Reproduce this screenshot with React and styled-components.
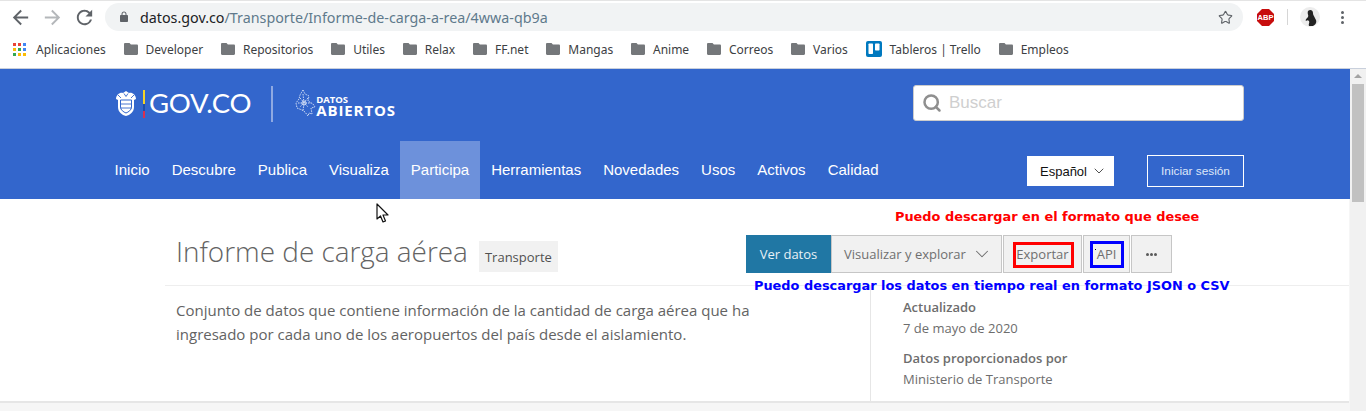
import React from 'react'
import styled, { createGlobalStyle } from 'styled-components'
import { Star, ChevronDown, Search } from 'lucide-react'

const GlobalStyle = createGlobalStyle`
  html, body {
    margin: 0;
    height: 411px;
    overflow: hidden;
    background: #fff;
    font-family: 'Open Sans', sans-serif;
  }
  * { box-sizing: border-box; }
`

const Shell = styled.div`
  width: 1366px;
  height: 411px;
  display: flex;
  flex-direction: column;
  overflow: hidden;
  position: relative;
`

/* browser chrome */
const Toolbar = styled.div`
  height: 35px;
  padding: 2px 0 0 9px;
  border-top: 1px solid #e4e4e4;
  display: flex;
  align-items: flex-start;
  background: #fff;
`
const NavIcon = styled.div`
  width: 32px;
  height: 28px;
  display: flex;
  align-items: center;
  color: ${props => props.color};
`
const UrlBar = styled.div`
  width: 1138px;
  height: 28px;
  background: #f1f3f4;
  border-radius: 14px;
  display: flex;
  align-items: center;
  padding: 0 10px 0 13px;
  font-family: 'Noto Sans', sans-serif;
  font-size: 14.3px;
  color: #5f7a8c;
`
const Host = styled.span`
  color: #202124;
  margin-left: 10px;
`
const ToolRight = styled.div`
  margin-left: auto;
  display: flex;
  align-items: center;
  color: #5f6368;
`
const Extras = styled.div`
  margin-left: 14px;
  display: flex;
  align-items: center;
  height: 28px;
`
const Divider = styled.div`
  width: 1px;
  height: 16px;
  background: #d6d6d6;
  margin: 0 12px 0 13px;
`
const Dots = styled.div`
  margin-left: 21px;
  display: flex;
  flex-direction: column;
  gap: 2px;
  span {
    width: 3px;
    height: 3px;
    border-radius: 50%;
    background: #5f6368;
  }
`
const Bookmarks = styled.div`
  height: 34px;
  padding: 0 0 5px 13px;
  display: flex;
  align-items: center;
  background: #fff;
  font-family: 'Noto Sans', sans-serif;
  font-size: 12px;
  color: #3c4043;
  border-bottom: 1px solid #c9d0dc;
`
const Bookmark = styled.div`
  display: flex;
  align-items: center;
  gap: 8px;
  margin-right: 17.8px;
  white-space: nowrap;
`
const AppsGrid = styled.div`
  width: 15px;
  display: grid;
  grid-template-columns: repeat(3, 3px);
  gap: 2px;
`
const AppsDot = styled.i`
  display: block;
  width: 3px;
  height: 3px;
  background: ${props => props.color};
`

/* page */
const Viewport = styled.div`
  flex: 1;
  display: flex;
  min-height: 0;
`
const Page = styled.div`
  flex: 1;
  min-width: 0;
  background: #f6f6f6;
  display: flex;
  flex-direction: column;
`
const Scrollbar = styled.div`
  width: 16px;
  background: #f1f1f1;
  padding: 15px 2px 0 2px;
  position: relative;
  &::before {
    content: '';
    position: absolute;
    top: 5px;
    left: 4px;
    border-left: 4px solid transparent;
    border-right: 4px solid transparent;
    border-bottom: 4px solid #a3a3a3;
  }
`
const ScrollThumb = styled.div`
  height: 118px;
  background: #c1c1c1;
`
const Header = styled.header`
  height: 130px;
  background: #3366cc;
  display: flex;
  flex-direction: column;
`
const HeaderTop = styled.div`
  height: 72px;
  padding: 16px 106px 0 115px;
  display: flex;
  justify-content: space-between;
`
const Logos = styled.div`
  display: flex;
  align-items: center;
  height: 36px;
  color: #fff;
`
const FlagBar = styled.div`
  width: 2px;
  height: 28px;
  margin: 2px 4px 0 6px;
  background: linear-gradient(#f5d327 0 50%, #1f4fa8 50% 75%, #d9304f 75%);
`
const GovText = styled.span`
  font-family: Lato, sans-serif;
  font-size: 27.5px;
  line-height: 36px;
  letter-spacing: -0.3px;
`
const LogoRule = styled.div`
  width: 2px;
  height: 36px;
  background: #8fa9e2;
  margin: 1px 21px 0 20px;
`
const DatosStack = styled.div`
  display: flex;
  flex-direction: column;
  margin-top: 7px;
  font-family: 'Open Sans', sans-serif;
  font-weight: 700;
`
const DatosSmall = styled.span`
  font-size: 9.5px;
  line-height: 8px;
`
const DatosBig = styled.span`
  font-size: 15px;
  line-height: 13px;
  letter-spacing: 0.9px;
`
const SearchBox = styled.div`
  width: 331px;
  height: 36px;
  background: #fff;
  border: 1px solid #ccc;
  border-radius: 3px;
  display: flex;
  align-items: center;
  padding-left: 8px;
  gap: 7px;
  font-family: 'Liberation Sans', sans-serif;
  font-size: 17px;
  color: #cfcfcf;
`
const HeaderNav = styled.nav`
  height: 58px;
  padding: 0 106px 0 103.6px;
  display: flex;
  font-family: 'Liberation Sans', sans-serif;
  font-size: 15px;
  color: #fff;
`
const NavItem = styled.div`
  padding: 0 11px 2px;
  display: flex;
  align-items: center;
  background: ${props => (props.$active ? '#6d91db' : 'transparent')};
`
const NavRight = styled.div`
  margin-left: auto;
  display: flex;
  align-items: center;
  padding-top: 2px;
  gap: 33px;
`
const LangButton = styled.div`
  width: 87px;
  height: 30px;
  padding-left: 13px;
  background: #fff;
  color: #111;
  font-size: 13px;
  display: flex;
  align-items: center;
  gap: 4px;
`
const LoginButton = styled.div`
  width: 97px;
  height: 32px;
  border: 1px solid #fff;
  color: #dfe7f8;
  font-size: 11.8px;
  display: flex;
  align-items: center;
  justify-content: center;
`
const Body = styled.main`
  height: 204px;
  margin-right: 1px;
  background: #fff;
  border-bottom: 2px solid #e6e6e6;
  padding-left: 165px;
  color: #636363;
  overflow: hidden;
`
const TitleRow = styled.div`
  height: 86px;
  width: 1007px;
  padding: 36px 0 0 11px;
  display: flex;
  align-items: flex-start;
`
const Title = styled.h1`
  margin: -3px 0 0;
  font-size: 27.9px;
  line-height: 38px;
  font-weight: 300;
  color: #636363;
  white-space: nowrap;
`
const Tag = styled.span`
  margin: 6px 0 0 11px;
  width: 79px;
  height: 31px;
  background: #f1f1f1;
  font-size: 13px;
  color: #505050;
  display: flex;
  align-items: center;
  justify-content: center;
`
const Actions = styled.div`
  margin-left: auto;
  display: flex;
  height: 38px;
`
const ActionButton = styled.div`
  width: ${props => props.$width}px;
  margin-right: ${props => props.$gap || 0}px;
  display: flex;
  align-items: center;
  justify-content: center;
  font-size: 13px;
  background: ${props => (props.$primary ? '#2077a4' : '#f1f1f1')};
  color: ${props => (props.$primary ? '#e8f1f6' : '#6f6f6f')};
  border: ${props => (props.$primary ? 'none' : '1px solid #c6c6c6')};
`
const MenuButton = styled(ActionButton)`
  justify-content: flex-start;
  padding-left: 12px;
  gap: 5px;
`
const More = styled.div`
  display: flex;
  gap: 1px;
  i {
    width: 3px;
    height: 3px;
    border-radius: 50%;
    background: #5a5a5a;
  }
`
const Columns = styled.div`
  display: grid;
  grid-template-columns: 705px 1fr;
  border-top: 1px solid #eee;
  height: 118px;
`
const Description = styled.p`
  margin: 0;
  padding: 12px 0 0 11px;
  font-size: 15px;
  line-height: 24px;
  color: #636363;
  white-space: nowrap;
`
const Aside = styled.aside`
  border-left: 1px solid #e6e6e6;
  padding: 11px 0 0 32px;
  font-size: 13px;
  line-height: 21px;
  color: #6d6d6d;
`
const MetaLabel = styled.div`
  font-weight: 600;
`
const MetaValue = styled.div`
  margin-bottom: ${props => (props.$gap ? 9 : 0)}px;
`

/* marks drawn over the screenshot */
const Note = styled.div`
  position: absolute;
  left: ${props => props.$x}px;
  top: ${props => props.$y}px;
  color: ${props => props.color};
  font-family: 'DejaVu Sans', sans-serif;
  font-weight: 700;
  font-size: 12.9px;
  line-height: 14px;
  white-space: nowrap;
`
const MarkBox = styled.div`
  position: absolute;
  left: ${props => props.$x}px;
  top: ${props => props.$y}px;
  width: ${props => props.$w}px;
  height: ${props => props.$h}px;
  border: 3px solid ${props => props.color};
`
const Speck = styled.div`
  position: absolute;
  left: 1095px;
  top: 249px;
  width: 1px;
  height: 1px;
  background: #111;
`
const Cursor = styled.svg`
  position: absolute;
  left: 376px;
  top: 203px;
`

const MaterialIcon = ({ d }) => (
  <svg width="23" height="23" viewBox="0 0 24 24" fill="currentColor"><path d={d} /></svg>
)

const BACK = 'M20 11H7.83l5.59-5.59L12 4l-8 8 8 8 1.41-1.41L7.83 13H20v-2z'
const FORWARD = 'M12 4l-1.41 1.41L16.17 11H4v2h12.17l-5.58 5.59L12 20l8-8z'
const RELOAD = 'M17.65 6.35A7.958 7.958 0 0 0 12 4c-4.42 0-7.99 3.58-7.99 8s3.57 8 7.99 8c3.73 0 6.84-2.55 7.73-6h-2.08A5.99 5.99 0 0 1 12 18c-3.31 0-6-2.69-6-6s2.69-6 6-6c1.66 0 3.14.69 4.22 1.78L13 11h7V4l-2.35 2.35z'

const LockIcon = () => (
  <svg width="12" height="12" viewBox="0 0 24 24" fill="#5f6368">
    <path d="M18 8h-1V6c0-2.76-2.24-5-5-5S7 3.24 7 6v2H6c-1.1 0-2 .9-2 2v10c0 1.1.9 2 2 2h12c1.1 0 2-.9 2-2V10c0-1.1-.9-2-2-2zM9 6c0-1.66 1.34-3 3-3s3 1.34 3 3v2H9V6z" />
  </svg>
)

const Folder = () => (
  <svg width="14" height="12" viewBox="0 0 14 12">
    <path d="M1.2 0h4.3l1.4 1.6h5.9c.7 0 1.2.5 1.2 1.2v8c0 .7-.5 1.2-1.2 1.2H1.2C.5 12 0 11.5 0 10.8V1.2C0 .5.5 0 1.2 0z" fill="#74777a" />
  </svg>
)

const TrelloIcon = () => (
  <svg width="16" height="16" viewBox="0 0 16 16">
    <rect width="16" height="16" rx="2" fill="#0079bf" />
    <rect x="2.5" y="2.5" width="4.5" height="10.5" rx="0.7" fill="#fff" />
    <rect x="9" y="2.5" width="4.5" height="7" rx="0.7" fill="#fff" />
  </svg>
)

const AbpIcon = () => (
  <svg width="17" height="17" viewBox="0 0 17 17">
    <polygon points="5,0 12,0 17,5 17,12 12,17 5,17 0,12 0,5" fill="#c70d0d" />
    <text x="8.5" y="11.2" textAnchor="middle" fontSize="7.5" fontWeight="700" fontFamily="Liberation Sans" fill="#fff">ABP</text>
  </svg>
)

const Avatar = () => (
  <svg width="20" height="20" viewBox="0 0 20 20">
    <circle cx="10" cy="10" r="10" fill="#ececec" />
    <path d="M8 4c2-2 5-1 5 2 0 2 1 3 3 7 1 3-1 5-3 6H9c-1-2 1-3 0-5-1-1-2-1-3 0-1-1 1-3 2-4 1-2-1-3 0-6z" fill="#222" />
  </svg>
)

const Shield = () => (
  <svg width="22" height="27" viewBox="0 0 22 27">
    <path d="M1 9C1 5 5 2 8 3l3-2 3 2c3-1 7 2 7 6l-2 1v7c0 5-4 8-8 9-4-1-8-4-8-9v-7z" fill="#fff" />
    <path d="M5.5 10h11v7c0 3-3 5-5.5 6-2.5-1-5.5-3-5.5-6z" fill="none" stroke="#3366cc" strokeWidth="1" />
    <path d="M5.5 14h11M5.5 18h11M3 5l3 3M19 5l-3 3M9 3.5l2 3 2-3" stroke="#3366cc" strokeWidth="0.9" fill="none" />
  </svg>
)

const MapMark = () => (
  <svg width="22" height="28" viewBox="0 0 22 28" fill="none" stroke="#dce6f8" strokeWidth="0.9">
    <path d="M9 1l2 4 4 2-1 5 5 3 2 3-4 1 1 6-3-1-1 3-3-4-3-2-5-2-1-5 3-4 1-4z" strokeDasharray="1.5 1" />
    <path d="M4 14h13M9 5l1 9-1 8M6 9l8 9M14 9l-8 9" strokeDasharray="1.5 1" />
    <circle cx="10" cy="14" r="2" />
  </svg>
)

const APPS = ['#ea4335', '#ea4335', '#4285f4', '#fbbc05', '#34a853', '#4285f4', '#34a853', '#fbbc05', '#fbbc05']
const BOOKMARKS = ['Developer', 'Repositorios', 'Utiles', 'Relax', 'FF.net', 'Mangas', 'Anime', 'Correos', 'Varios']
const NAV = ['Inicio', 'Descubre', 'Publica', 'Visualiza', 'Participa', 'Herramientas', 'Novedades', 'Usos', 'Activos', 'Calidad']

export default function App() {
  return (
    <Shell>
      <GlobalStyle />
      <Toolbar>
        <NavIcon color="#5f6368"><MaterialIcon d={BACK} /></NavIcon>
        <NavIcon color="#b4b7ba"><MaterialIcon d={FORWARD} /></NavIcon>
        <NavIcon color="#5f6368"><MaterialIcon d={RELOAD} /></NavIcon>
        <UrlBar>
          <LockIcon />
          <Host>datos.gov.co</Host>/Transporte/Informe-de-carga-a-rea/4wwa-qb9a
          <ToolRight><Star size={15} strokeWidth={1.8} /></ToolRight>
        </UrlBar>
        <Extras>
          <AbpIcon />
          <Divider />
          <Avatar />
          <Dots><span /><span /><span /></Dots>
        </Extras>
      </Toolbar>
      <Bookmarks>
        <Bookmark>
          <AppsGrid>
            {APPS.map((color, i) => <AppsDot key={i} color={color} />)}
          </AppsGrid>
          Aplicaciones
        </Bookmark>
        {BOOKMARKS.map(name => (
          <Bookmark key={name}><Folder />{name}</Bookmark>
        ))}
        <Bookmark><TrelloIcon />Tableros | Trello</Bookmark>
        <Bookmark><Folder />Empleos</Bookmark>
      </Bookmarks>
      <Viewport>
        <Page>
          <Header>
            <HeaderTop>
              <Logos>
                <Shield />
                <FlagBar />
                <GovText>GOV.CO</GovText>
                <LogoRule />
                <MapMark />
                <DatosStack>
                  <DatosSmall>DATOS</DatosSmall>
                  <DatosBig>ABIERTOS</DatosBig>
                </DatosStack>
              </Logos>
              <SearchBox>
                <Search size={20} strokeWidth={3} color="#8f8f8f" />
                Buscar
              </SearchBox>
            </HeaderTop>
            <HeaderNav>
              {NAV.map(item => (
                <NavItem key={item} $active={item === 'Participa'}>{item}</NavItem>
              ))}
              <NavRight>
                <LangButton>Español <ChevronDown size={16} strokeWidth={1.4} color="#444" /></LangButton>
                <LoginButton>Iniciar sesión</LoginButton>
              </NavRight>
            </HeaderNav>
          </Header>
          <Body>
            <TitleRow>
              <Title>Informe de carga aérea</Title>
              <Tag>Transporte</Tag>
              <Actions>
                <ActionButton $primary $width={85}>Ver datos</ActionButton>
                <MenuButton $width={171} $gap={1}>Visualizar y explorar <ChevronDown size={22} strokeWidth={1.1} /></MenuButton>
                <ActionButton $width={79} $gap={1}>Exportar</ActionButton>
                <ActionButton $width={47} $gap={1}>API</ActionButton>
                <ActionButton $width={41}><More><i /><i /><i /></More></ActionButton>
              </Actions>
            </TitleRow>
            <Columns>
              <Description>
                Conjunto de datos que contiene información de la cantidad de carga aérea que ha<br />
                ingresado por cada uno de los aeropuertos del país desde el aislamiento.
              </Description>
              <Aside>
                <MetaLabel>Actualizado</MetaLabel>
                <MetaValue $gap>7 de mayo de 2020</MetaValue>
                <MetaLabel>Datos proporcionados por</MetaLabel>
                <MetaValue>Ministerio de Transporte</MetaValue>
              </Aside>
            </Columns>
          </Body>
        </Page>
        <Scrollbar><ScrollThumb /></Scrollbar>
      </Viewport>
      <Note color="#ff0000" $x={895} $y={210}>Puedo descargar en el formato que desee</Note>
      <Note color="#0000ff" $x={754} $y={279}>Puedo descargar los datos en tiempo real en formato JSON o CSV</Note>
      <MarkBox color="#ff0000" $x={1013} $y={242} $w={61} $h={26} />
      <MarkBox color="#0000ff" $x={1090} $y={241} $w={34} $h={27} />
      <Speck />
      <Cursor width="14" height="21" viewBox="0 0 14 21">
        <path d="M1 1v15l3.5-3 2.5 6 2.5-1-2.5-6h5z" fill="#fff" stroke="#111" strokeWidth="1.2" strokeLinejoin="round" />
      </Cursor>
    </Shell>
  )
}
